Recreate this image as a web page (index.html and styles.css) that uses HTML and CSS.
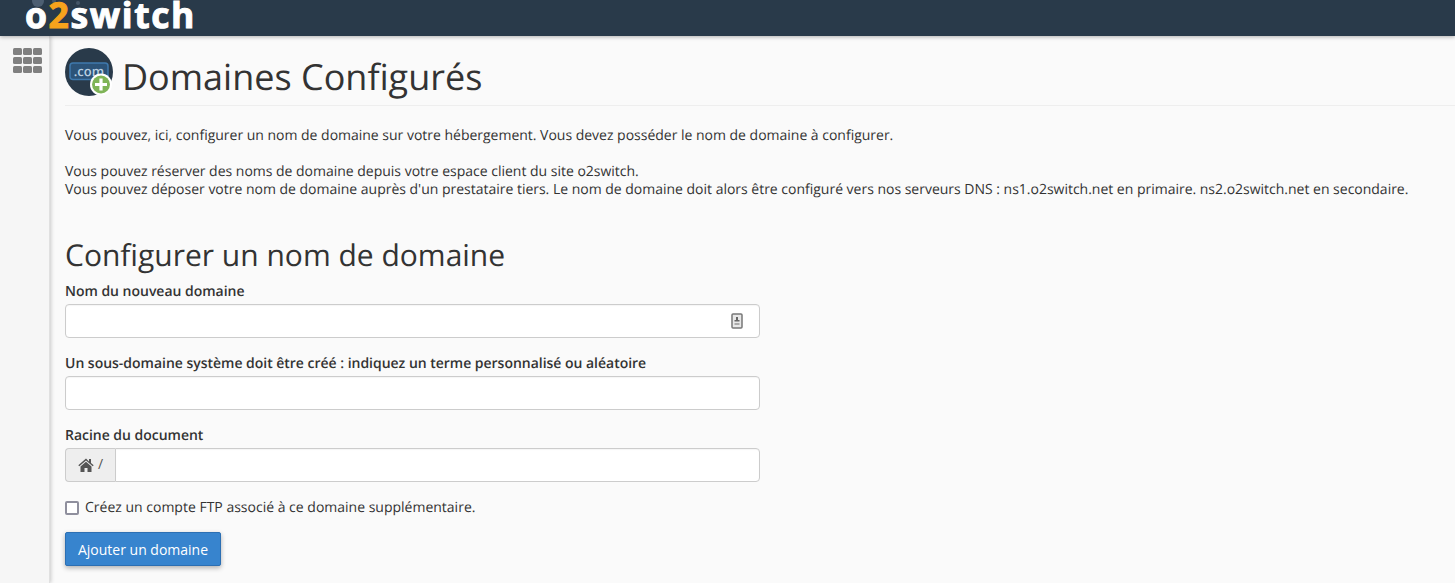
FILE: index.html
```html
<!DOCTYPE html>
<html lang="fr">
<head>
<meta charset="utf-8">
<title>Domaines Configurés</title>
<link rel="stylesheet" href="styles.css">
</head>
<body>
<header class="topbar">
  <svg class="bubbles" width="90" height="12" viewBox="0 0 90 12"><circle cx="38" cy="1" r="6" fill="#4d5f72"/><circle cx="54" cy="1" r="2" fill="#445668"/><circle cx="78" cy="3" r="2" fill="#445668"/></svg>
  <div class="logo">o<span class="two">2</span>switch</div>
</header>
<div class="shell">
  <aside class="sidebar">
    <div class="apps"><i></i><i></i><i></i><i></i><i></i><i></i><i></i><i></i><i></i></div>
  </aside>
  <main class="content">
    <div class="page-head">
      <div class="page-icon">
        <svg width="48" height="48" viewBox="0 0 48 48">
          <circle cx="24" cy="24" r="24" fill="#293a4a"/>
          <rect x="5" y="15" width="38" height="16.500" rx="3" fill="#2c5378" stroke="#3f79ad" stroke-width="1.500"/>
          <text x="24" y="28" text-anchor="middle" class="com">.com</text>
          <circle cx="36" cy="36.500" r="11" fill="#fff"/>
          <circle cx="36" cy="36.500" r="9" fill="#7fb457"/>
          <path d="M36 30.500v12M30 36.500h12" stroke="#fff" stroke-width="3.200"/>
        </svg>
      </div>
      <h1>Domaines Configurés</h1>
    </div>
    <p class="intro">Vous pouvez, ici, configurer un nom de domaine sur votre hébergement. Vous devez posséder le nom de domaine à configurer.</p>
    <p class="intro">Vous pouvez réserver des noms de domaine depuis votre espace client du site o2switch.<br>Vous pouvez déposer votre nom de domaine auprès d'un prestataire tiers. Le nom de domaine doit alors être configuré vers nos serveurs DNS : ns1.o2switch.net en primaire. ns2.o2switch.net en secondaire.</p>
    <h2>Configurer un nom de domaine</h2>
    <form class="form">
      <div class="field">
        <label class="lbl" for="d">Nom du nouveau domaine</label>
        <div class="input-wrap">
          <input id="d" class="input" type="text">
          <svg class="pw-icon" width="12" height="16" viewBox="0 0 12 16"><rect x="1" y="1" width="10" height="14" rx="1" fill="#e8e8e8" stroke="#777" stroke-width="1.500"/><rect x="3.500" y="7" width="5" height="1.500" fill="#666"/><rect x="5" y="4" width="2" height="3" fill="#666"/><rect x="3.500" y="10" width="5" height="2" fill="#aaa"/></svg>
        </div>
      </div>
      <div class="field">
        <label class="lbl" for="s">Un sous-domaine système doit être créé : indiquez un terme personnalisé ou aléatoire</label>
        <input id="s" class="input" type="text">
      </div>
      <div class="field">
        <label class="lbl" for="r">Racine du document</label>
        <div class="group">
          <span class="addon">
            <svg width="16" height="14" viewBox="0 0 16 14"><path d="M8 0.500 0.300 7.200l1 1.100L8 2.500l6.700 5.800 1-1.100-2.700-2.300V1h-2v2.500z" fill="#555"/><path d="M8 3.700 2.500 8.500V14h4V10h3v4h4V8.500z" fill="#555"/></svg>
            <span>/</span>
          </span>
          <input id="r" class="input group-input" type="text">
        </div>
      </div>
      <label class="check"><span class="box"></span>Créez un compte FTP associé à ce domaine supplémentaire.</label>
      <button class="btn" type="button">Ajouter un domaine</button>
    </form>
  </main>
</div>
</body>
</html>
```

FILE: styles.css
```css
* { box-sizing: border-box; }
html, body { margin: 0; height: 100%; overflow: hidden; }
body { font-family: "Open Sans", sans-serif; font-size: 14px; line-height: 20px; color: #333; background: #fafafa; text-rendering: geometricPrecision; }
.topbar { position: relative; height: 36px; background: #293a4a; padding-left: 25px; box-shadow: 0 1px 4px rgba(0,0,0,.3); z-index: 2; overflow: hidden; }
.bubbles { position: absolute; left: 0; top: 0; }
.logo { position: relative; font-weight: 700; font-size: 35.500px; line-height: 30px; letter-spacing: 1.600px; color: #fff; -webkit-text-stroke: 1px #fff; }
.two { color: #f7a31c; -webkit-text-stroke-color: #f7a31c; }
.shell { display: flex; height: 547px; }
.sidebar { width: 50px; flex: none; background: #f6f6f6; border-right: 1px solid #e0e0e0; box-shadow: 1px 0 4px rgba(0,0,0,.2); padding: 12px 0 0 13px; }
.apps { display: grid; grid-template-columns: repeat(3, 9px); grid-auto-rows: 7px; gap: 2px 1px; width: 29px; }
.apps i { background: #808080; border-radius: 1.500px; }
.content { flex: 1; min-width: 0; padding: 12px 0 0 15px; }
.page-head { display: flex; align-items: center; gap: 9px; height: 58px; padding-bottom: 10px; border-bottom: 1px solid #eee; }
.page-icon { width: 48px; height: 48px; flex: none; }
.page-icon svg { display: block; }
.com { font-size: 13px; font-weight: 600; fill: #b9cfe2; }
h1 { margin: 10px 0 0; font-size: 36px; font-weight: 400; line-height: 40px; color: #333; }
.intro { margin: 0 0 18px; color: #333; letter-spacing: -.011px; line-height: 18px; }
.page-head + .intro { margin-top: 21px; }
h2 { margin: 36px 0 0; font-size: 30px; font-weight: 400; line-height: 40px; color: #333; }
.form { width: 695px; margin-top: 7px; }
.field { margin-bottom: 16px; }
.lbl { display: block; font-weight: 600; margin-bottom: 2px; letter-spacing: -.02px; }
.input { display: block; width: 100%; height: 34px; border: 1px solid #ccc; border-radius: 4px; background: #fff; padding: 6px 12px; font: inherit; box-shadow: inset 0 1px 1px rgba(0,0,0,.04); }
.input-wrap { position: relative; }
.pw-icon { position: absolute; right: 17px; top: 9px; }
.group { display: flex; }
.addon { display: flex; align-items: center; gap: 4px; width: 50px; flex: none; height: 34px; padding-left: 12px; background: #eee; border: 1px solid #ccc; border-right: 0; border-radius: 4px 0 0 4px; color: #555; }
.group-input { flex: 1; width: auto; min-width: 0; border-radius: 0 4px 4px 0; }
.check { display: flex; align-items: center; gap: 6px; color: #333; }
.box { width: 14px; height: 14px; border: 2px solid #8f8f9d; border-radius: 2px; background: #fff; }
.btn { display: block; margin-top: 14px; height: 34px; width: 156px; padding: 2px 0 0; background: #3784ce; border: 1px solid #2c6fb3; border-radius: 2px; color: #fff; font: inherit; box-shadow: 0 2px 5px rgba(0,0,0,.3); }
```
